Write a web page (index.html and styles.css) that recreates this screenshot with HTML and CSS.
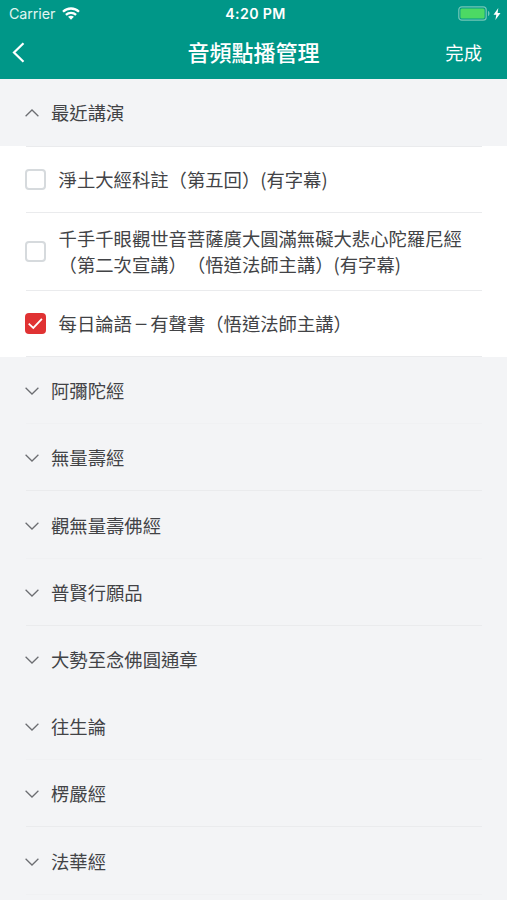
FILE: index.html
```html
<!DOCTYPE html>
<html lang="zh-Hant">
<head>
<meta charset="utf-8">
<title>音頻點播管理</title>
<link rel="stylesheet" href="styles.css">
</head>
<body>
<svg width="0" height="0" class="defs">
  <symbol id="chevron" viewBox="0 0 14 8"><path d="M.6.7 7 7 13.4.7" fill="none" stroke="currentColor" stroke-width="1.25"/></symbol>
</svg>
<header class="header">
  <div class="status">
    <div class="carrier">
      <span>Carrier</span>
      <svg class="wifi" viewBox="0 0 18 13"><g fill="none" stroke="#fff" stroke-width="2.3"><path d="M1 4.7C5.4.4 12.6.4 17 4.7"/><path d="M3.9 7.9c2.9-2.7 7.3-2.7 10.2 0"/></g><path d="M6.1 9.8c1.7-1.5 4.1-1.5 5.8 0L9 12.7z" fill="#fff"/></svg>
    </div>
    <div class="time">4:20 PM</div>
    <div class="power">
      <svg class="battery" viewBox="0 0 33 15"><rect x=".8" y=".8" width="27.4" height="13.4" rx="3" fill="none" stroke="#72c7b7" stroke-width="1.2"/><rect x="2.4" y="2.4" width="24.2" height="10.2" rx="1.5" fill="#4cd964"/><path d="M30 5c2 .6 2 4.4 0 5z" fill="#72c7b7"/></svg>
      <svg class="bolt" viewBox="0 0 8 12"><path d="M5.3 0 .5 6.7h2.8L2.4 12l5.1-7H4.6z" fill="#fff"/></svg>
    </div>
  </div>
  <nav class="nav">
    <svg class="back" viewBox="0 0 13 21"><path d="M11.5 1.2 2 10.5l9.5 9.3" fill="none" stroke="#fff" stroke-width="2.2"/></svg>
    <h1 class="title">音頻點播管理</h1>
    <span class="done">完成</span>
  </nav>
</header>
<main>
  <div class="group first"><svg class="chevron up"><use href="#chevron"/></svg>最近講演</div>
  <div class="items">
    <div class="item"><span class="check"></span><span>淨土大經科註<i lang="zh-Hans">（</i>第五回<i lang="zh-Hans">）</i>(有字幕)</span></div>
    <div class="item tall"><span class="check"></span><span>千手千眼觀世音菩薩廣大圓滿無礙大悲心陀羅尼經<br><i lang="zh-Hans">（</i>第二次宣講<i lang="zh-Hans">）（</i>悟道法師主講<i lang="zh-Hans">）</i>(有字幕)</span></div>
    <div class="item"><span class="check on"><svg viewBox="0 0 21 21"><path d="m3.7 10.7 4.6 4.2 8.6-9" fill="none" stroke="#fff" stroke-width="1.8"/></svg></span><span>每日論語<b class="dash">－</b>有聲書<i lang="zh-Hans">（</i>悟道法師主講<i lang="zh-Hans">）</i></span></div>
  </div>
  <div class="group faint"><svg class="chevron"><use href="#chevron"/></svg>阿彌陀經</div>
  <div class="group"><svg class="chevron"><use href="#chevron"/></svg>無量壽經</div>
  <div class="group faint"><svg class="chevron"><use href="#chevron"/></svg>觀無量壽佛經</div>
  <div class="group"><svg class="chevron"><use href="#chevron"/></svg>普賢行願品</div>
  <div class="group clear"><svg class="chevron"><use href="#chevron"/></svg>大勢至念佛圓通章</div>
  <div class="group faint"><svg class="chevron"><use href="#chevron"/></svg>往生論</div>
  <div class="group"><svg class="chevron"><use href="#chevron"/></svg>楞嚴經</div>
  <div class="group faint"><svg class="chevron"><use href="#chevron"/></svg>法華經</div>
</main>
</body>
</html>
```

FILE: styles.css
```css
* { box-sizing: border-box; }
body {
  margin: 0;
  height: 900px;
  overflow: hidden;
  background: #f3f4f6;
  color: #424346;
  font: 18.33px/26px "Noto Sans CJK TC", sans-serif;
  text-spacing-trim: space-all;
}
svg { display: block; flex: none; }
i { font-family: "Noto Sans CJK SC", sans-serif; font-style: normal; line-height: 1; }
.defs { display: none; }
.header {
  height: 79px;
  background: #009788;
  color: #fff;
}
.status {
  display: grid;
  grid-template-columns: 1fr auto 1fr;
  align-items: center;
  height: 27px;
  padding: 0 6px 0 9px;
  font: 14.3px/27px Inter, "Liberation Sans", sans-serif;
}
.carrier { display: flex; align-items: center; gap: 7px; color: #e0f5f1; }
.carrier span { letter-spacing: -.1px; }
.wifi { width: 18px; height: 13px; }
.time { margin-left: 1px; font-size: 14.2px; font-weight: 600; letter-spacing: .35px; }
.power { display: flex; align-items: center; justify-content: flex-end; gap: 2px; }
.battery { width: 33px; height: 15px; }
.bolt { width: 8px; height: 12px; }
.nav {
  display: grid;
  grid-template-columns: 1fr auto 1fr;
  align-items: center;
  height: 51px;
  padding: 0 25px 0 12px;
}
.back { width: 13px; height: 21px; }
.title { margin: 0 0 4px 13px; font-size: 22px; line-height: 32px; font-weight: 500; }
.done { justify-self: end; margin-bottom: 2px; }
.group, .item {
  display: flex;
  align-items: center;
  position: relative;
  height: 67.2px;
  padding-left: 25px;
  white-space: nowrap;
}
.group { gap: 12px; }
.group.first { padding-bottom: 1px; }
.group::after, .item::after {
  content: "";
  position: absolute;
  left: 26px;
  right: 25px;
  bottom: -.4px;
  height: 1px;
  background: #eaebed;
}
.group.faint::after { background: #f0f1f3; }
.group.clear::after { display: none; }
.chevron { width: 14px; height: 8px; margin-top: 2px; color: #6c6e72; }
.up { transform: rotate(180deg); }
.items { background: #fff; }
.item { gap: 12.6px; height: 66.5px; }
.item.tall { height: 77.5px; }
.check {
  flex: none;
  width: 21px;
  height: 21px;
  border: 2px solid #d6dadd;
  border-radius: 4px;
}
.check.on { border: 0; background: #e03233; }
.dash {
  display: inline-block;
  font-weight: 400;
  line-height: 1;
  transform: scaleX(.8);
}
```
